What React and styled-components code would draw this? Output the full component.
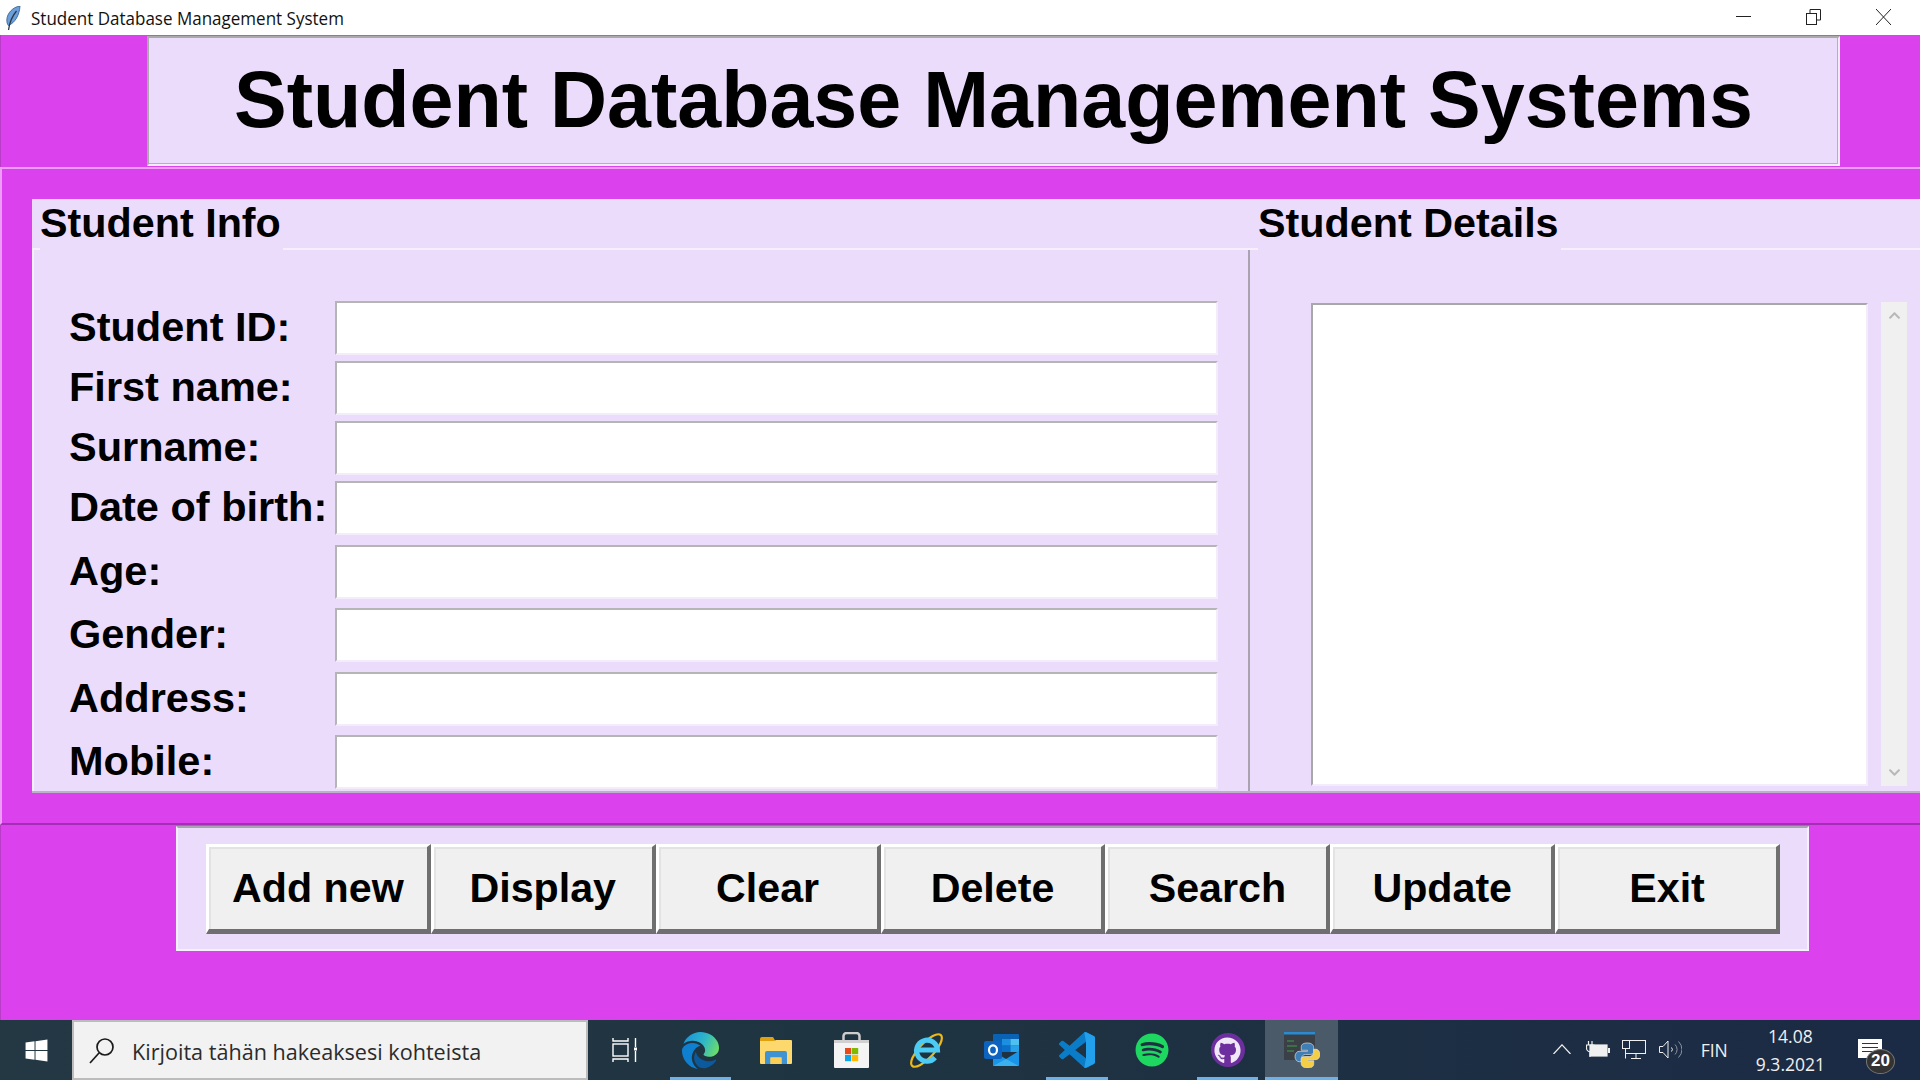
import React from 'react'
import styled, { createGlobalStyle } from 'styled-components'
import { FaSpotify, FaGithub, FaWindows, FaChevronUp, FaChevronDown } from 'react-icons/fa'

const GlobalStyle = createGlobalStyle`
  html, body { margin: 0; padding: 0; height: 100%; overflow: hidden; }
  body { font-family: "Liberation Sans", Arial, sans-serif; background: #dc41ee; }
  * { box-sizing: border-box; }
`

const Screen = styled.div`
  width: 1920px;
  height: 1080px;
  display: grid;
  grid-template-rows: 35px 132px 658px 195px 60px;
  background: #dc41ee;
  overflow: hidden;
`

const TitleBar = styled.div`
  display: flex;
  align-items: center;
  background: #fff;
  padding-left: 6px;
`

const AppTitle = styled.span`
  margin-left: 10px;
  font-family: "Open Sans", sans-serif;
  font-size: 17.5px;
  color: #111;
  transform: scaleX(0.972);
  transform-origin: left;
`

const WindowControls = styled.div`
  margin-left: auto;
  display: flex;
  align-items: center;
  height: 100%;
  padding: 0 1.5px 2px 0;
`

const WindowButton = styled.div`
  width: 70px;
  height: 100%;
  display: flex;
  align-items: center;
  justify-content: center;
`

const HeaderRow = styled.div`
  display: flex;
  padding: 1px 0 1px 146px;
  border-left: 1px solid #b93cc9;
`

const HeaderPanel = styled.div`
  width: 1693px;
  display: flex;
  align-items: center;
  justify-content: center;
  background: #ecdcfc;
  border: 2px solid;
  border-color: #aaa #f3ecfb #f3ecfb #aaa;
  box-shadow: inset -1px -1px 0 #b5b0ba;
  padding-bottom: 2px;
`

const Title = styled.h1`
  margin: 0;
  font-size: 79px;
  font-weight: 700;
  color: #000;
  white-space: nowrap;
`

const MainFrame = styled.div`
  border-top: 2px solid #ee9df6;
  border-left: 2px solid #ee9df6;
  border-bottom: 2px solid #a32fb3;
  padding: 30px 0 30px 30px;
  display: grid;
  grid-template-columns: 1218px 1fr;
`

const Panel = styled.section`
  background: #ecdcfc;
  display: flex;
  flex-direction: column;
  border-bottom: 2px solid #bcb0c8;
`

const PanelHead = styled.div`
  height: 51px;
  flex: none;
  display: flex;
  align-items: flex-end;
`

const LeadRule = styled.div`
  width: 8px;
  height: 2px;
  background: #f6effd;
`

const PanelTitle = styled.h2`
  margin: 0;
  padding: 0 2px 5px 0;
  font-size: 41.3px;
  line-height: 46px;
  font-weight: 700;
  color: #000;
  white-space: nowrap;
  transform: translateY(1px);
`

const HeadRule = styled.div`
  flex: 1;
  height: 2px;
  background: #f6effd;
`

const FieldList = styled.div`
  flex: 1;
  display: flex;
  flex-direction: column;
  padding: 51px 0 0 35px;
  border-left: 2px solid #f6effd;
  border-right: 2px solid #a9a2b0;
`

const Field = styled.div`
  display: flex;
  align-items: center;
  height: 54px;
  margin-bottom: ${p => p.$gap}px;
`

const FieldLabel = styled.label`
  width: 266px;
  padding-bottom: 2px;
  font-size: 41.5px;
  font-weight: 700;
  color: #000;
  white-space: nowrap;
`

const FieldInput = styled.input`
  width: 883px;
  height: 100%;
  background: #fff;
  border: 2px solid;
  border-color: #b5b5b5 #f3ecfb #f3ecfb #b5b5b5;
  outline: none;
  padding: 0;
`

const DetailsBody = styled.div`
  flex: 1;
  display: flex;
  padding: 53px 13px 5px 61px;
  gap: 13px;
`

const DetailsBox = styled.div`
  width: 557px;
  background: #fff;
  border: 2px solid;
  border-color: #a8a8a8 #f3ecfb #f3ecfb #a8a8a8;
`

const ScrollBar = styled.div`
  width: 26px;
  margin-top: -1px;
  background: #f0f0f0;
  display: flex;
  flex-direction: column;
  align-items: center;
  justify-content: space-between;
  padding: 7px 0;
  color: #b8b8b8;
  font-size: 13px;
`

const ButtonRow = styled.div`
  display: flex;
  align-items: flex-start;
  padding: 1px 0 0 175px;
  border-left: 1px solid #b93cc9;
`

const ButtonPanel = styled.div`
  width: 1633px;
  height: 125px;
  background: #ecdcfc;
  border: 2px solid;
  border-color: #a9a2b0 #f6effd #f6effd #f6effd;
  padding: 16px 27px 16px 28px;
  display: grid;
  grid-template-columns: repeat(7, 1fr);
`

const ActionButton = styled.button`
  height: 90px;
  background: #f0f0f0;
  font-family: inherit;
  font-size: 41.2px;
  font-weight: 700;
  color: #000;
  padding: 0;
  border-style: solid;
  border-width: 3px 4px 5px 3px;
  border-color: #fff #6f6f6f #6f6f6f #fff;
  box-shadow: inset 2px 2px 0 #e3e3e3;
`

const Taskbar = styled.div`
  display: flex;
  align-items: stretch;
  background: linear-gradient(90deg, #233843 0%, #1f3441 45%, #1b2a45 100%);
`

const StartButton = styled.div`
  width: 72px;
  display: flex;
  align-items: center;
  justify-content: center;
  color: #fff;
  font-size: 25px;
`

const SearchBox = styled.div`
  width: 516px;
  display: flex;
  align-items: center;
  gap: 17px;
  padding: 2px 0 0 15px;
  background: #f2f2f2;
  border: 2px solid #bcbcbc;
  font-family: "Open Sans", sans-serif;
  font-size: 21.6px;
  color: #2b2b2b;
`

const TaskIcons = styled.div`
  display: flex;
  align-items: stretch;
  margin-left: 7px;
`

const TaskViewSlot = styled.div`
  width: 68px;
  padding-right: 9px;
  display: flex;
  align-items: center;
  justify-content: center;
`

const TaskIcon = styled.div`
  width: ${p => (p.$active ? 73 : 75.3)}px;
  position: relative;
  display: flex;
  align-items: center;
  justify-content: center;
  background: ${p => (p.$active ? '#4a5a69' : 'transparent')};
  &::after {
    content: '';
    display: ${p => (p.$running ? 'block' : 'none')};
    position: absolute;
    left: ${p => (p.$active ? 0 : '7px')};
    right: ${p => (p.$active ? 0 : '7px')};
    bottom: 0;
    height: 3px;
    background: #6db1e8;
  }
`

const GithubBadge = styled.div`
  width: 34px;
  height: 34px;
  border-radius: 50%;
  background: #6e2f9e;
  color: #f1e8f7;
  display: flex;
  align-items: center;
  justify-content: center;
  font-size: 27px;
`

const Tray = styled.div`
  margin-left: auto;
  display: flex;
  align-items: center;
  color: #f0f0f0;
`

const TrayIcon = styled.div`
  display: flex;
  align-items: center;
  justify-content: center;
  margin-right: ${p => p.$mr || 0}px;
  padding-bottom: 2px;
`

const TrayLang = styled.span`
  font-family: "Open Sans", sans-serif;
  font-size: 17.5px;
  margin-right: 28px;
`

const Clock = styled.div`
  display: flex;
  flex-direction: column;
  align-items: center;
  gap: 8px;
  font-family: "Open Sans", sans-serif;
  font-size: 17.5px;
  line-height: 20px;
  margin-right: 33px;
`

const Notice = styled.div`
  position: relative;
  width: 24px;
  height: 19px;
  margin-bottom: 4px;
`

const NoticeCount = styled.span`
  position: absolute;
  left: 8px;
  top: 10px;
  width: 29px;
  height: 25px;
  border-radius: 50%;
  background: #333;
  border: 1px solid #777;
  color: #fff;
  font-size: 17px;
  font-weight: 700;
  display: flex;
  align-items: center;
  justify-content: center;
`

const DesktopEdge = styled.div`
  width: 1px;
  margin: 0 7px 0 30px;
  background: #5a6474;
`

const FeatherIcon = () => (
  <svg width="15" height="24" viewBox="0 0 15 24">
    <path d="M14 0C7 1 1 7 .8 14c0 2 .4 4 1.500 5.500C9 17 13.500 9 14 0z" fill="#6a9fdc" stroke="#2f5b8c" strokeWidth=".8" />
    <path d="M10.500 5C7 9 4 14 2.500 24" fill="none" stroke="#2d3640" strokeWidth="1.300" />
  </svg>
)

const MinimizeIcon = () => (
  <svg width="15" height="15" viewBox="0 0 15 15"><path d="M0 7.500h15" stroke="#222" strokeWidth="1" /></svg>
)

const RestoreIcon = () => (
  <svg width="15" height="16" viewBox="0 0 15 16" fill="none" stroke="#222" strokeWidth="1">
    <rect x=".5" y="4.500" width="10" height="11" />
    <path d="M4 4.500V.5h10.500v10.500h-4" />
  </svg>
)

const CloseIcon = () => (
  <svg width="15" height="16" viewBox="0 0 15 16" fill="none" stroke="#222" strokeWidth="1">
    <path d="M0 0 15 16M15 0 0 16" />
  </svg>
)

const SearchIcon = () => (
  <svg width="26" height="28" viewBox="0 0 26 28" fill="none" stroke="#1a1a1a" strokeWidth="1.700">
    <circle cx="16" cy="10" r="8" />
    <path d="M10 16 1 26" />
  </svg>
)

const TaskViewIcon = () => (
  <svg width="26" height="24" viewBox="0 0 26 24" fill="none" stroke="#fff" strokeWidth="1.400">
    <path d="M1 0v3h15V0M1 24v-3h15v3" />
    <rect x="1" y="6" width="15" height="12" />
    <path d="M23.500 0v9M23.500 13v11" />
    <rect x="22" y="9.500" width="3" height="3" fill="#fff" stroke="none" />
  </svg>
)

const EdgeIcon = () => (
  <svg width="37" height="37" viewBox="0 0 24 24">
    <defs>
      <linearGradient id="edgeTop" x1="0" y1="0.300" x2="1" y2="0.600">
        <stop offset="0" stopColor="#1a93dc" />
        <stop offset=".55" stopColor="#2fb7c8" />
        <stop offset="1" stopColor="#6bdc6a" />
      </linearGradient>
    </defs>
    <path d="M21.860 17.860q.14 0 .25.12.1.13.1.25t-.11.33l-.32.46-.43.53-.44.5q-.21.25-.38.42l-.22.23q-.58.53-1.340 1.040-.76.51-1.600.91-.86.4-1.740.64t-1.670.24q-.9 0-1.690-.28-.8-.28-1.480-.78-.68-.5-1.220-1.170-.53-.66-.92-1.440-.38-.77-.58-1.600-.2-.83-.2-1.670 0-1 .32-1.960.33-.97.87-1.800.14.95.55 1.770.41.82 1.020 1.500.6.68 1.380 1.210.78.54 1.640.9.86.36 1.770.56.92.2 1.800.2 1.120 0 2.180-.24 1.060-.23 2.060-.72l.2-.1.2-.05z" fill="#0b5a9e" />
    <path d="M6.360 16.590q0 1.100.27 2.150.27 1.060.78 2.030.51.96 1.240 1.770.74.82 1.660 1.400-1.470-.2-2.800-.74-1.330-.55-2.480-1.370-1.150-.83-2.080-1.900-.92-1.070-1.580-2.330T.36 14.940Q0 13.540 0 12.060q0-.81.32-1.490.31-.68.83-1.230.53-.55 1.200-.96.66-.4 1.350-.66.74-.27 1.500-.39.78-.12 1.550-.12.7 0 1.420.1.72.12 1.400.35.68.23 1.320.57.63.35 1.160.83-.35 0-.7.07-.33.07-.65.23v-.02q-.63.28-1.200.74-.57.46-1.050 1.040-.48.58-.87 1.260-.38.67-.65 1.390-.27.71-.42 1.440-.15.72-.15 1.380z" fill="#0f7fd0" />
    <path d="M11.960.06q1.700 0 3.330.39 1.630.38 3.070 1.150 1.430.77 2.620 1.930 1.180 1.160 1.980 2.700.49.94.76 1.960.28 1 .28 2.080 0 .89-.23 1.700-.24.8-.69 1.480-.45.68-1.100 1.220-.64.53-1.450.88-.54.24-1.110.36-.58.13-1.160.13-.42 0-.97-.03-.54-.03-1.100-.12-.55-.09-1.050-.28-.5-.19-.84-.5-.12-.09-.23-.24-.1-.16-.1-.33 0-.15.16-.35.16-.2.35-.5.2-.28.36-.68.16-.4.16-.95 0-1.060-.4-1.960-.4-.91-1.060-1.640-.66-.74-1.520-1.280-.86-.55-1.790-.89-.84-.3-1.720-.44-.87-.14-1.760-.14-1.550 0-3.060.45T.94 7.550q.71-1.740 1.810-3.130 1.100-1.380 2.520-2.350Q6.680 1.100 8.370.58q1.700-.52 3.580-.52Z" fill="url(#edgeTop)" />
  </svg>
)

const FolderIcon = () => (
  <svg width="32" height="27" viewBox="0 0 32 27">
    <path d="M0 2a2 2 0 0 1 2-2h11l3 5H0z" fill="#dfa10f" />
    <path d="M0 4h14l2-1h15a1 1 0 0 1 1 1v22a1 1 0 0 1-1 1H1a1 1 0 0 1-1-1z" fill="#fdd86c" />
    <path d="M5 27V16a2 2 0 0 1 2-2h18a2 2 0 0 1 2 2v11h-5.500v-6.500h-11V27z" fill="#3f93d3" />
    <rect x="10.500" y="20.500" width="11" height="6.500" fill="#fbcf57" />
  </svg>
)

const StoreIcon = () => (
  <svg width="35" height="36" viewBox="0 0 35 36">
    <path d="M9.500 9V4a3 3 0 0 1 3-3h10a3 3 0 0 1 3 3v5" fill="none" stroke="#cdcdcd" strokeWidth="2.500" />
    <path d="M0 8h35v27a1 1 0 0 1-1 1H1a1 1 0 0 1-1-1z" fill="#f4f4f4" />
    <rect y="8" width="35" height="3" fill="#d0d0d0" />
    <rect x="11" y="16" width="6.200" height="6.200" fill="#e8481e" />
    <rect x="18" y="16" width="6.200" height="6.200" fill="#7fba00" />
    <rect x="11" y="23" width="6.200" height="6.200" fill="#0ea5e9" />
    <rect x="18" y="23" width="6.200" height="6.200" fill="#ffb900" />
  </svg>
)

const IEIcon = () => (
  <svg width="35" height="35" viewBox="0 0 35 35">
    <ellipse cx="17.500" cy="17.500" rx="21" ry="7.500" transform="rotate(-47 17.500 17.500)" fill="none" stroke="#ecb91a" strokeWidth="2.200" />
    <path d="M8 17h20.500A10.500 10.500 0 1 0 26 24.500" fill="none" stroke="#4ccbf5" strokeWidth="5" />
  </svg>
)

const OutlookIcon = () => (
  <svg width="35" height="32" viewBox="0 0 35 32">
    <rect x="9" y="0" width="26" height="18" rx="1" fill="#0a62b4" />
    <rect x="18" y="5" width="8.500" height="6.500" fill="#1c8fe0" />
    <rect x="26.500" y="5" width="8.500" height="6.500" fill="#4fc1f0" />
    <rect x="18" y="11.500" width="8.500" height="6.500" fill="#0a6fc8" />
    <rect x="26.500" y="11.500" width="8.500" height="6.500" fill="#27a2e6" />
    <path d="M9 17 22 25 35 17v14a1 1 0 0 1-1 1H10a1 1 0 0 1-1-1z" fill="#1a94e6" />
    <path d="M9 32 22 25 35 32z" fill="#39b0f0" />
    <rect x="0" y="7" width="18" height="18" rx="2" fill="#0c64c0" />
    <ellipse cx="9" cy="16" rx="4" ry="4.600" fill="none" stroke="#fff" strokeWidth="2.200" />
  </svg>
)

const VSCodeIcon = () => (
  <svg width="36" height="36" viewBox="0 0 24 24">
    <path d="M23.150 2.587 18.210.21a1.494 1.494 0 0 0-1.705.29l-9.460 8.630-4.120-3.128a.999.999 0 0 0-1.276.057L.327 7.261A1 1 0 0 0 .326 8.740L3.899 12 .326 15.260a1 1 0 0 0 .001 1.479L1.650 17.940a.999.999 0 0 0 1.276.057l4.120-3.128 9.460 8.630a1.492 1.492 0 0 0 1.704.29l4.942-2.377A1.500 1.500 0 0 0 24 20.060V3.939a1.500 1.500 0 0 0-.85-1.352zm-5.146 14.861L10.826 12l7.178-5.448v10.896z" fill="#0a7cc8" fillRule="evenodd" />
    <path d="M16.800.2 18.210.21l4.940 2.377A1.500 1.500 0 0 1 24 3.939V20.060a1.500 1.500 0 0 1-.85 1.352l-4.940 2.377-1.400.01 1.194-6.350V6.550z" fill="#22a0ec" />
  </svg>
)

const IdleIcon = () => (
  <svg width="36" height="36" viewBox="0 0 36 36">
    <rect x="0" y="1" width="31" height="27" fill="#3a4046" />
    <rect x="0" y="0" width="31" height="2.500" fill="#2b8ad0" />
    <path d="M3 9h7M3 14h10M3 19h7" stroke="#3f9e4a" strokeWidth="1.200" />
    <g transform="translate(11 11) scale(1.040)" stroke="#e8eef2" strokeWidth=".6">
      <path d="M12 0C7 0 6 2 6 4v3h6v1H4C2 8 0 10 0 13s2 5 4 5h2v-3c0-2 2-4 4-4h5c2 0 3-1 3-3V4c0-2-2-4-6-4z" fill="#3f7fb5" />
      <path d="M12 24c5 0 6-2 6-4v-3h-6v-1h8c2 0 4-2 4-5s-2-5-4-5h-2v3c0 2-2 4-4 4H9c-2 0-3 1-3 3v4c0 2 2 4 6 4z" fill="#f4cf45" />
    </g>
  </svg>
)

const TrayChevron = () => (
  <svg width="18" height="10" viewBox="0 0 18 10" fill="none" stroke="#f0f0f0" strokeWidth="1.200">
    <path d="M.5 10 9 .8l8.500 9.200" />
  </svg>
)

const PlugBatteryIcon = () => (
  <svg width="24" height="17" viewBox="0 0 24 17" fill="none" stroke="#f0f0f0" strokeWidth="1.200">
    <rect x="4" y="4" width="17" height="11" fill="#f0f0f0" />
    <rect x="22" y="7" width="2" height="5" fill="#f0f0f0" stroke="none" />
    <path d="M2.500 0v4M6 0v4M.5 4H8v3a3.700 3.700 0 0 1-7.500 0zM4 11v5" stroke="#f0f0f0" />
  </svg>
)

const NetworkIcon = () => (
  <svg width="24" height="19" viewBox="0 0 24 19" fill="none" stroke="#f0f0f0" strokeWidth="1">
    <rect x="3.500" y=".5" width="20" height="13" />
    <rect x=".5" y=".5" width="7" height="8" fill="#1b2c44" />
    <path d="M3.500 8.500V18.500M9 18.500h10M14 13.500v5" />
  </svg>
)

const VolumeIcon = () => (
  <svg width="23" height="19" viewBox="0 0 23 19" fill="none" stroke="#f0f0f0" strokeWidth="1">
    <path d="M.5 6.500h3.500l5-5.500v17l-5-5.500H.5z" />
    <path d="M12.500 7.500a3 3 0 0 1 0 4" />
    <path d="M16 4.500a7 7 0 0 1 0 10M19.500 1.500a11 11 0 0 1 0 16" stroke="#8b94a0" />
  </svg>
)

const NoticeIcon = () => (
  <svg width="24" height="19" viewBox="0 0 24 19">
    <rect width="24" height="19" fill="#fff" />
    <path d="M4 4.500h16M4 8.500h16M4 12.500h16" stroke="#333" strokeWidth="1.200" />
  </svg>
)

const fields = [
  { label: 'Student ID:', gap: 6 },
  { label: 'First name:', gap: 6 },
  { label: 'Surname:', gap: 6 },
  { label: 'Date of birth:', gap: 10 },
  { label: 'Age:', gap: 9 },
  { label: 'Gender:', gap: 10 },
  { label: 'Address:', gap: 9 },
  { label: 'Mobile:', gap: 0 },
]

const buttons = ['Add new', 'Display', 'Clear', 'Delete', 'Search', 'Update', 'Exit']

export default function App() {
  return (
    <>
      <GlobalStyle />
      <Screen>
        <TitleBar>
          <FeatherIcon />
          <AppTitle>Student Database Management System</AppTitle>
          <WindowControls>
            <WindowButton><MinimizeIcon /></WindowButton>
            <WindowButton><RestoreIcon /></WindowButton>
            <WindowButton><CloseIcon /></WindowButton>
          </WindowControls>
        </TitleBar>

        <HeaderRow>
          <HeaderPanel>
            <Title>Student Database Management Systems</Title>
          </HeaderPanel>
        </HeaderRow>

        <MainFrame>
          <Panel>
            <PanelHead>
              <LeadRule />
              <PanelTitle>Student Info</PanelTitle>
              <HeadRule />
            </PanelHead>
            <FieldList>
              {fields.map(f => (
                <Field key={f.label} $gap={f.gap}>
                  <FieldLabel>{f.label}</FieldLabel>
                  <FieldInput />
                </Field>
              ))}
            </FieldList>
          </Panel>
          <Panel>
            <PanelHead>
              <LeadRule />
              <PanelTitle>Student Details</PanelTitle>
              <HeadRule />
            </PanelHead>
            <DetailsBody>
              <DetailsBox />
              <ScrollBar>
                <FaChevronUp />
                <FaChevronDown />
              </ScrollBar>
            </DetailsBody>
          </Panel>
        </MainFrame>

        <ButtonRow>
          <ButtonPanel>
            {buttons.map(b => <ActionButton key={b}>{b}</ActionButton>)}
          </ButtonPanel>
        </ButtonRow>

        <Taskbar>
          <StartButton><FaWindows /></StartButton>
          <SearchBox>
            <SearchIcon />
            <span>Kirjoita tähän hakeaksesi kohteista</span>
          </SearchBox>
          <TaskIcons>
            <TaskViewSlot><TaskViewIcon /></TaskViewSlot>
            <TaskIcon $running><EdgeIcon /></TaskIcon>
            <TaskIcon><FolderIcon /></TaskIcon>
            <TaskIcon><StoreIcon /></TaskIcon>
            <TaskIcon><IEIcon /></TaskIcon>
            <TaskIcon><OutlookIcon /></TaskIcon>
            <TaskIcon $running><VSCodeIcon /></TaskIcon>
            <TaskIcon><FaSpotify size={34} color="#1ed760" /></TaskIcon>
            <TaskIcon $running><GithubBadge><FaGithub /></GithubBadge></TaskIcon>
            <TaskIcon $active $running><IdleIcon /></TaskIcon>
          </TaskIcons>
          <Tray>
            <TrayIcon $mr={15}><TrayChevron /></TrayIcon>
            <TrayIcon $mr={12}><PlugBatteryIcon /></TrayIcon>
            <TrayIcon $mr={13}><NetworkIcon /></TrayIcon>
            <TrayIcon $mr={19}><VolumeIcon /></TrayIcon>
            <TrayLang>FIN</TrayLang>
            <Clock><span>14.08</span><span>9.3.2021</span></Clock>
            <Notice>
              <NoticeIcon />
              <NoticeCount>20</NoticeCount>
            </Notice>
            <DesktopEdge />
          </Tray>
        </Taskbar>
      </Screen>
    </>
  )
}
